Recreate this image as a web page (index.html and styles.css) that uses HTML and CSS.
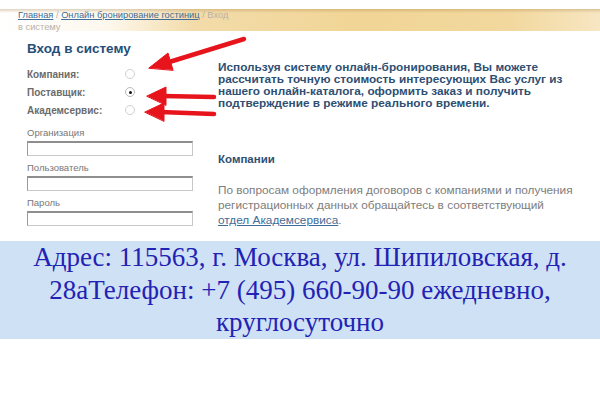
FILE: index.html
```html
<!DOCTYPE html>
<html lang="ru">
<head>
<meta charset="utf-8">
<link rel="stylesheet" href="styles.css">
</head>
<body>
<div class="page">
  <div class="band">
    <div class="crumbs"><a href="#">Главная</a> / <a href="#">Онлайн бронирование гостиниц</a> <span>/ Вход</span> <span>в систему</span></div>
  </div>
  <div class="main">
    <div class="left">
      <h1 class="title">Вход в систему</h1>
      <div class="radios">
        <div class="rrow"><span class="rlabel">Компания:</span><span class="radio"></span></div>
        <div class="rrow"><span class="rlabel">Поставщик:</span><span class="radio on"></span></div>
        <div class="rrow"><span class="rlabel">Академсервис:</span><span class="radio"></span></div>
      </div>
      <div class="fields">
        <div class="flabel">Организация</div>
        <div class="input"></div>
        <div class="flabel">Пользователь</div>
        <div class="input"></div>
        <div class="flabel">Пароль</div>
        <div class="input"></div>
      </div>
    </div>
    <div class="right">
      <p class="intro">Используя систему онлайн-бронирования, Вы можете рассчитать точную стоимость интересующих Вас услуг из нашего онлайн-каталога, оформить заказ и получить подтверждение в режиме реального времени.</p>
      <h2 class="sub">Компании</h2>
      <p class="info">По вопросам оформления договоров с компаниями и получения регистрационных данных обращайтесь в соответствующий <a href="#">отдел Академсервиса</a>.</p>
    </div>
  </div>
  <div class="address">Адрес: 115563, г. Москва, ул. Шипиловская, д. 28аТелефон: +7 (495) 660-90-90 ежедневно, круглосуточно</div>
  <svg class="arrows" width="600" height="400" viewBox="0 0 600 400">
    <g fill="#e8141c" stroke="#e8141c" stroke-linecap="round">
      <line x1="244" y1="39" x2="166" y2="63" stroke-width="4.5"/>
      <polygon points="149,68 168,53 173,70" stroke-width="1"/>
      <line x1="214" y1="97" x2="162" y2="96" stroke-width="4.5"/>
      <polygon points="147,96 166,87 166,105" stroke-width="1"/>
      <line x1="214" y1="114" x2="160" y2="112" stroke-width="4.5"/>
      <polygon points="145,112 164,103 164,121" stroke-width="1"/>
    </g>
  </svg>
</div>
</body>
</html>
```
FILE: styles.css
```css
html, body { margin: 0; padding: 0; background: #fff; }
.page { position: relative; width: 600px; height: 400px; overflow: hidden; font-family: "Liberation Sans", Arial, sans-serif; }
.band {
  margin-top: 9px;
  height: 22px;
  background:
    linear-gradient(to bottom, rgba(170,130,70,0.35) 0, rgba(255,255,255,0) 4px, rgba(255,255,255,0) 100%),
    linear-gradient(to right, #fff 0, #fdf8ee 18%, #f3dcaa 32%, #f1d596 60%, #f2d89e 85%, #f7e6c2 100%);
  padding-left: 18px;
}
.crumbs { width: 212px; font-size: 9.3px; line-height: 11.5px; color: #b9b2a6; padding-top: 1px; }
.crumbs a { color: #3f6d98; text-decoration: underline; }
.main { display: flex; padding-left: 27px; }
.left { width: 170px; }
.title { margin: 10px 0 0; font-size: 13.5px; line-height: 16px; color: #264f78; font-weight: bold; }
.radios { margin-top: 8px; }
.rrow { display: flex; align-items: center; height: 18px; }
.rlabel { width: 98px; font-size: 10px; font-weight: bold; color: #6b6b6b; }
.radio { width: 10px; height: 10px; border: 1px solid #cfcfcf; border-radius: 50%; box-sizing: border-box; position: relative; background: #fff; }
.radio.on { border-color: #bbb; }
.radio.on::after { content: ""; position: absolute; left: 2.5px; top: 2.5px; width: 3px; height: 3px; border-radius: 50%; background: #111; }
.fields { margin-top: 6px; }
.flabel { font-size: 9.5px; color: #777; line-height: 12px; margin-top: 6px; }
.fields .flabel:first-child { margin-top: 8px; }
.input { margin-top: 2px; width: 166px; height: 15px; box-sizing: border-box; border: 1px solid #c8c8c8; border-top: 2px solid #8e8e8e; border-left: 1px solid #9a9a9a; background: #fff; }
.right { margin-left: 21px; width: 358px; }
.intro { margin: 30px 0 0; font-size: 11.8px; line-height: 12px; font-weight: bold; color: #2f4f73; }
.sub { margin: 43px 0 0; font-size: 11.5px; line-height: 14px; font-weight: bold; color: #2f4f73; }
.info { margin: 17px 0 0; font-size: 11.8px; line-height: 15px; color: #7d7d7d; }
.info a { color: #3f6d98; text-decoration: underline; }
.address {
  margin-top: 13px;
  height: 98px;
  background: #cfe1f4;
  color: #2222b4;
  text-align: center;
  font-family: "Liberation Serif", "Times New Roman", serif;
  font-size: 27px;
  line-height: 32.5px;
  padding: 0 20px 0;
  box-sizing: border-box;
}
.arrows { position: absolute; left: 0; top: 0; pointer-events: none; }
```
